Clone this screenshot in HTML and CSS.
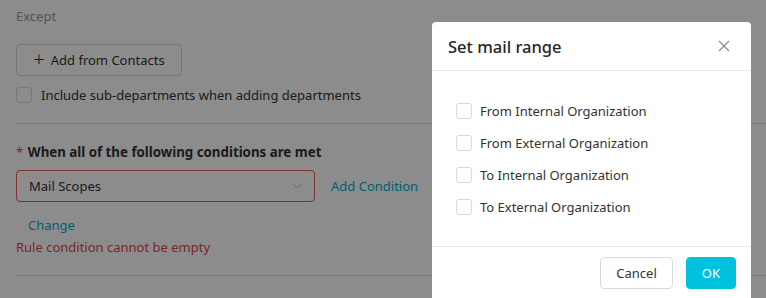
FILE: index.html
```html
<!DOCTYPE html>
<html lang="en">
<head>
    <meta charset="UTF-8">
    <meta name="viewport" content="width=device-width, initial-scale=1.0">
    <title>Mail rule</title>
    <link rel="stylesheet" href="styles.css">
</head>
<body>
    <div class="page">
        <div class="muted">Except</div>
        <button class="btn add-btn"><span class="plus">+</span>Add from Contacts</button>
        <label class="check-row">
            <span class="box"></span>
            <span>Include sub-departments when adding departments</span>
        </label>
        <div class="divider"></div>

        <div class="cond-title"><span class="req">*</span> When all of the following conditions are met</div>
        <div class="cond-row">
            <div class="select error">
                <span>Mail Scopes</span>
                <svg class="chevron" width="10" height="6" viewBox="0 0 10 6"><path d="M1 1l4 4 4-4" fill="none" stroke="#bbb" stroke-width="1"/></svg>
            </div>
            <a class="link">Add Condition</a>
        </div>
        <div class="change"><a class="link">Change</a></div>
        <div class="err-text">Rule condition cannot be empty</div>
        <div class="divider last"></div>
    </div>

    <div class="mask"></div>

    <div class="modal">
        <div class="modal-head">
            <span class="modal-title">Set mail range</span>
            <svg class="close" width="12" height="12" viewBox="0 0 12 12"><path d="M1 1l10 10M11 1L1 11" stroke="#8c8c8c" stroke-width="1.2"/></svg>
        </div>
        <div class="modal-body">
            <label class="opt"><span class="box"></span>From Internal Organization</label>
            <label class="opt"><span class="box"></span>From External Organization</label>
            <label class="opt"><span class="box"></span>To Internal Organization</label>
            <label class="opt"><span class="box"></span>To External Organization</label>
        </div>
        <div class="modal-foot">
            <button class="btn">Cancel</button>
            <button class="btn primary">OK</button>
        </div>
    </div>
</body>
</html>
```

FILE: styles.css
```css
body { margin: 0; font-family: "Noto Sans", "Open Sans", sans-serif; font-size: 13px; color: #333; background: #fff; overflow: hidden; }
.page { padding: 5px 0 0 16px; }
.muted { color: #999; line-height: 22px; }
.btn { font-family: inherit; font-size: 13px; color: #333; background: #fff; border: 1px solid #d9d9d9; border-radius: 4px; height: 32px; padding: 0 15px; cursor: pointer; }
.add-btn { margin-top: 17px; width: 166px; padding: 0; display: flex; align-items: center; justify-content: center; gap: 6px; }
.plus { font-size: 20px; font-weight: 300; line-height: 1; margin-top: -2px; }
.check-row { display: flex; align-items: center; gap: 9px; line-height: 22px; margin-top: 8px; }
.box { width: 14px; height: 14px; border: 1px solid #d9d9d9; border-radius: 3px; background: #fff; flex: none; }
.divider { height: 1px; background: #ddd; margin-top: 17px; }
.cond-title { font-weight: 700; line-height: 22px; margin-top: 17px; font-size: 13.3px; }
.req { color: #e54545; font-weight: 400; margin-right: 1px; }
.cond-row { display: flex; align-items: center; gap: 16px; margin-top: 7px; }
.select { width: 299px; height: 32px; box-sizing: border-box; border: 1px solid #d9d9d9; border-radius: 4px; display: flex; align-items: center; justify-content: space-between; padding: 0 12px; }
.select.error { border-color: #e85a5a; }
.link { color: #00b0cc; cursor: pointer; }
.change { line-height: 22px; margin-top: 12px; padding-left: 12px; }
.err-text { color: #e54545; line-height: 22px; }
.divider.last { margin-top: 17px; }
.mask { position: fixed; inset: 0; background: rgba(0, 0, 0, 0.45); }
.modal { position: absolute; top: 22px; left: 432px; width: 319px; height: 276px; background: #fff; border-radius: 4px 4px 0 0; }
.modal-head { height: 49px; box-sizing: border-box; border-bottom: 1px solid #e8e8e8; display: flex; align-items: center; justify-content: space-between; padding: 0 21px 0 16px; }
.modal-title { font-size: 16.5px; font-weight: 500; color: #262626; }
.modal-body { padding: 24px 24px 23px; border-bottom: 1px solid #e8e8e8; }
.opt { display: flex; align-items: center; gap: 8px; height: 32px; }
.modal-foot { display: flex; justify-content: flex-end; gap: 13px; padding: 10px 15px 0; }
.primary { background: #00c1de; border-color: #00c1de; color: #fff; padding: 0 15px; }
```
